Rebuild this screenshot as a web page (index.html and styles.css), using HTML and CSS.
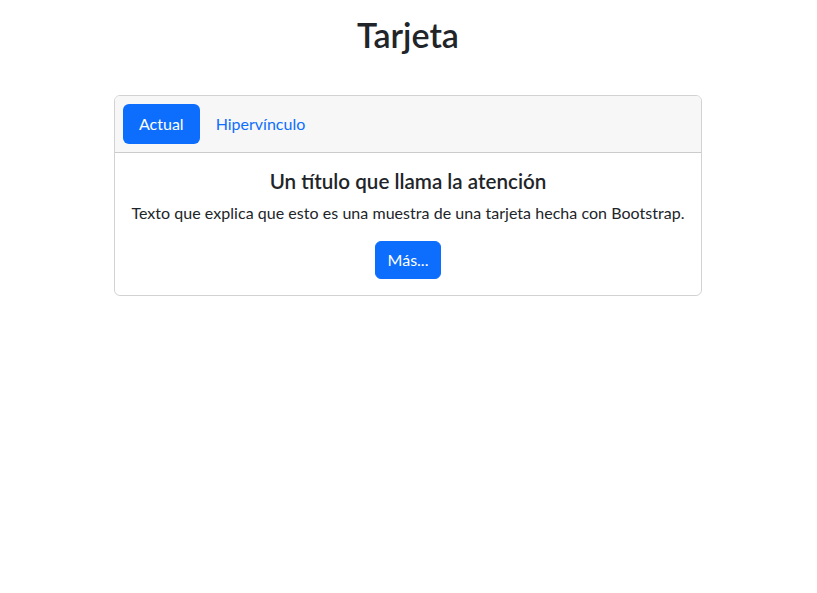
FILE: index.html
```html
<!DOCTYPE html>
<html lang="es">
<head>
<meta charset="utf-8">
<title>Tarjeta</title>
<link rel="stylesheet" href="styles.css">
</head>
<body>
<main class="page">
  <h1 class="page-title">Tarjeta</h1>
  <section class="card">
    <header class="card-header">
      <nav class="pills">
        <a class="pill active" href="#">Actual</a>
        <a class="pill" href="#">Hipervínculo</a>
      </nav>
    </header>
    <div class="card-body">
      <h5 class="card-title">Un título que llama la atención</h5>
      <p class="card-text">Texto que explica que esto es una muestra de una tarjeta hecha con Bootstrap.</p>
      <a class="btn" href="#">Más...</a>
    </div>
  </section>
</main>
</body>
</html>
```
FILE: styles.css
```css
html, body {
  margin: 0;
  padding: 0;
  background: #fff;
}
body {
  font-family: "Lato", "Liberation Sans", sans-serif;
  font-size: 16px;
  line-height: 24px;
  color: #212529;
}
.page {
  display: flex;
  flex-direction: column;
  align-items: center;
  padding: 14px 1px 0 0;
}
.page-title {
  margin: 0 0 40px;
  font-size: 34px;
  line-height: 41px;
  font-weight: 600;
}
.card {
  width: 588px;
  box-sizing: border-box;
  border: 1px solid rgba(0, 0, 0, 0.175);
  border-radius: 6px;
  overflow: hidden;
  text-align: center;
}
.card-header {
  background: #f7f7f7;
  border-bottom: 1px solid rgba(0, 0, 0, 0.175);
  padding: 8px;
}
.pills {
  display: flex;
}
.pill {
  display: block;
  padding: 8px 16px;
  border-radius: 6px;
  color: #0d6efd;
  text-decoration: none;
}
.pill.active {
  background: #0d6efd;
  color: #fff;
}
.card-body {
  padding: 16px;
}
.card-title {
  margin: 0 0 8px;
  font-size: 20.6px;
  line-height: 24px;
  font-weight: 600;
}
.card-text {
  margin: 0 0 16px;
  white-space: nowrap;
  letter-spacing: 0.04px;
}
.btn {
  display: inline-block;
  padding: 6px 12px;
  border: 1px solid #0d6efd;
  border-radius: 6px;
  background: #0d6efd;
  color: #fff;
  text-decoration: none;
  vertical-align: top;
}
```
